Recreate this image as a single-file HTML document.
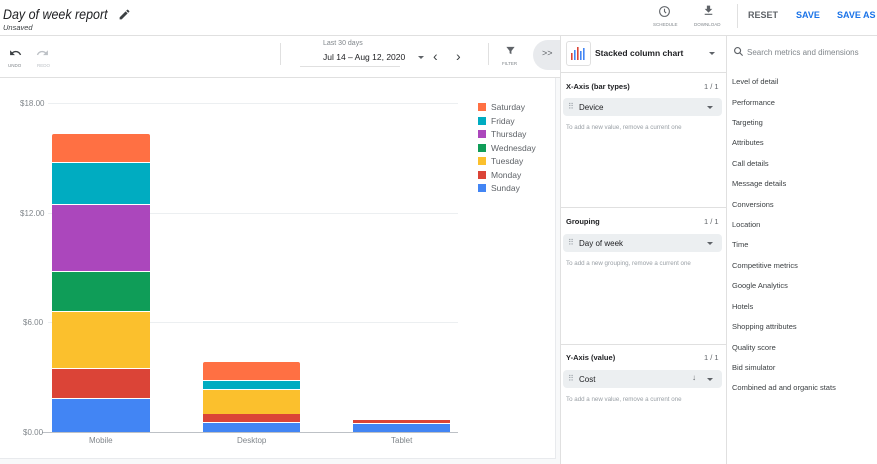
<!DOCTYPE html>
<html><head><style>
*{margin:0;padding:0;box-sizing:border-box;white-space:nowrap}
body{width:877px;height:464px;overflow:hidden;background:#fff;font-family:"Liberation Sans",Arial,sans-serif;position:relative;color:#202124}
.a{position:absolute}
.g{font-size:6.5px;color:#80868b}
.tick{font-size:8px;color:#80868b}
.gl{position:absolute;left:48px;width:410px;height:1px;background:#eceff1}
.seg{position:absolute}
.leg{position:absolute;left:478px;font-size:8.5px;color:#5f6368}
.leg i{display:inline-block;width:8px;height:8px;margin-right:5px;vertical-align:-1px}
.item{position:absolute;left:732px;font-size:7.5px;color:#3c4043}
.chip{position:absolute;left:563px;width:159px;height:18px;background:#eceff1;border-radius:4px;font-size:8px;color:#202124;padding:5px 0 0 16px}
.chip:before{content:"⠿";position:absolute;left:5px;top:4px;color:#9aa0a6;font-size:8px}
.chip:after{content:"";position:absolute;right:9px;top:8px;border:3px solid transparent;border-top:3px solid #5f6368}
.hd{position:absolute;left:566px;font-size:7.5px;font-weight:bold}
.hn{position:absolute;left:704px;font-size:7.5px;color:#5f6368}
.hint{position:absolute;left:566px;font-size:6.2px;color:#9aa0a6}
</style></head><body>
<div class="a" style="left:3px;top:6px;font-size:14px;font-style:italic;color:#202124;transform:scaleX(0.89);transform-origin:0 0">Day of week report</div>
<svg class="a" style="left:118px;top:8px" width="13" height="13" viewBox="0 0 24 24"><path d="M3 17.25V21h3.75L17.8 9.94l-3.75-3.75L3 17.250zM20.7 7.04a1 1 0 0 0 0-1.41l-2.34-2.34a1 1 0 0 0-1.41 0l-1.83 1.83 3.75 3.75 1.83-1.83z" fill="#3c4043"/></svg>
<div class="a" style="left:3px;top:23px;font-size:7.5px;font-style:italic;color:#3c4043">Unsaved</div>
<svg class="a" style="left:658px;top:5px" width="13" height="13" viewBox="0 0 24 24"><circle cx="12" cy="12" r="9" fill="none" stroke="#5f6368" stroke-width="2"/><path d="M12 7v5l3 3" fill="none" stroke="#5f6368" stroke-width="2"/></svg>
<div class="a g" style="left:653px;top:22px;font-size:4.5px">SCHEDULE</div>
<svg class="a" style="left:702px;top:4px" width="13" height="13" viewBox="0 0 24 24"><path d="M19 9h-4V3H9v6H5l7 7 7-7zM5 18v2h14v-2H5z" fill="#5f6368"/></svg>
<div class="a g" style="left:694px;top:22px;font-size:4.5px">DOWNLOAD</div>
<div class="a" style="left:737px;top:4px;width:1px;height:24px;background:#e0e0e0"></div>
<div class="a" style="left:748px;top:10px;font-size:9px;color:#5f6368;font-weight:bold">RESET</div>
<div class="a" style="left:796px;top:10px;font-size:9px;color:#1a73e8;font-weight:bold">SAVE</div>
<div class="a" style="left:837px;top:10px;font-size:9px;color:#1a73e8;font-weight:bold">SAVE AS</div>
<div class="a" style="left:0;top:35px;width:877px;height:1px;background:#e0e0e0"></div>
<svg class="a" style="left:9px;top:48px" width="13" height="10" viewBox="0 0 24 16"><path d="M12.5 4C9.85 4 7.45 5 5.6 6.6L2 3v9h9L7.38 8.38C8.77 7.22 10.54 6.5 12.5 6.5c3.54 0 6.55 2.31 7.6 5.5l2.37-.78C21.08 7.03 17.15 4 12.5 4z" fill="#3c4043"/></svg>
<svg class="a" style="left:36px;top:48px" width="13" height="10" viewBox="0 0 24 16"><path d="M18.4 6.6C16.55 5 14.15 4 11.5 4 6.85 4 2.92 7.03 1.54 11.22l2.36.78C4.95 8.81 7.95 6.5 11.5 6.5c1.95 0 3.73.72 5.12 1.88L13 12h9V3l-3.6 3.6z" fill="#bdc1c6"/></svg>
<div class="a g" style="left:8px;top:63px;font-size:4.5px">UNDO</div>
<div class="a" style="left:37px;top:63px;font-size:4.5px;color:#bdc1c6">REDO</div>
<div class="a" style="left:280px;top:43px;width:1px;height:22px;background:#e0e0e0"></div>
<div class="a" style="left:323px;top:40px;font-size:7px;color:#80868b">Last 30 days</div>
<div class="a" style="left:323px;top:52px;font-size:8.5px;color:#202124">Jul 14 – Aug 12, 2020</div>
<div class="a" style="left:300px;top:66px;width:100px;height:1px;background:#e0e0e0"></div>
<div class="a" style="left:418px;top:56px;border:3px solid transparent;border-top:3px solid #5f6368"></div>
<div class="a" style="left:433px;top:48px;font-size:14px;color:#3c4043">‹</div>
<div class="a" style="left:456px;top:48px;font-size:14px;color:#3c4043">›</div>
<div class="a" style="left:488px;top:43px;width:1px;height:22px;background:#e0e0e0"></div>
<svg class="a" style="left:505px;top:45px" width="11" height="11" viewBox="0 0 24 24"><path d="M3 4h18l-7 9v7l-4-2v-5z" fill="#5f6368"/></svg>
<div class="a g" style="left:502px;top:61px;font-size:4.5px">FILTER</div>
<div class="a" style="left:533px;top:40px;width:28px;height:30px;border-radius:15px 0 0 15px;background:#e8eaed"></div>
<div class="a" style="left:542px;top:48px;font-size:9px;color:#5f6368">&gt;&gt;</div>
<div class="a" style="left:0;top:77px;width:560px;height:1px;background:#e0e0e0"></div>
<div class="a" style="left:0;top:78px;width:560px;height:386px;background:#f8f9fa"></div>
<div class="a" style="left:0;top:78px;width:556px;height:381px;background:#fff;border-right:1px solid #e8eaed;border-bottom:1px solid #e8eaed"></div>
<div class="gl" style="top:103px"></div><div class="gl" style="top:213px"></div><div class="gl" style="top:322px"></div><div class="gl" style="top:432px;background:#bdc1c6;left:42px;width:416px"></div>
<div class="a tick" style="left:20px;top:99px">$18.00</div>
<div class="a tick" style="left:20px;top:209px">$12.00</div>
<div class="a tick" style="left:23px;top:318px">$6.00</div>
<div class="a tick" style="left:23px;top:428px">$0.00</div>
<div class="seg" style="left:52px;width:98px;top:134px;height:28px;background:#ff7043;border-radius:2px 2px 0 0"></div>
<div class="seg" style="left:52px;width:98px;top:163px;height:41px;background:#00acc1"></div>
<div class="seg" style="left:52px;width:98px;top:205px;height:66px;background:#ab47bc"></div>
<div class="seg" style="left:52px;width:98px;top:272px;height:39px;background:#0f9d58"></div>
<div class="seg" style="left:52px;width:98px;top:312px;height:56px;background:#fbc02d"></div>
<div class="seg" style="left:52px;width:98px;top:369px;height:29px;background:#db4437"></div>
<div class="seg" style="left:52px;width:98px;top:399px;height:33px;background:#4285f4"></div>
<div class="seg" style="left:203px;width:97px;top:362px;height:18px;background:#ff7043;border-radius:2px 2px 0 0"></div>
<div class="seg" style="left:203px;width:97px;top:381px;height:8px;background:#00acc1"></div>
<div class="seg" style="left:203px;width:97px;top:390px;height:24px;background:#fbc02d"></div>
<div class="seg" style="left:203px;width:97px;top:414px;height:8px;background:#db4437"></div>
<div class="seg" style="left:203px;width:97px;top:423px;height:9px;background:#4285f4"></div>
<div class="seg" style="left:353px;width:97px;top:420px;height:3px;background:#db4437"></div>
<div class="seg" style="left:353px;width:97px;top:424px;height:8px;background:#4285f4"></div>
<div class="a tick" style="left:89px;top:436px">Mobile</div>
<div class="a tick" style="left:237px;top:436px">Desktop</div>
<div class="a tick" style="left:391px;top:436px">Tablet</div>
<div class="leg" style="top:102px"><i style="background:#ff7043"></i>Saturday</div>
<div class="leg" style="top:116px"><i style="background:#00acc1"></i>Friday</div>
<div class="leg" style="top:129px"><i style="background:#ab47bc"></i>Thursday</div>
<div class="leg" style="top:143px"><i style="background:#0f9d58"></i>Wednesday</div>
<div class="leg" style="top:156px"><i style="background:#fbc02d"></i>Tuesday</div>
<div class="leg" style="top:170px"><i style="background:#db4437"></i>Monday</div>
<div class="leg" style="top:183px"><i style="background:#4285f4"></i>Sunday</div>
<div class="a" style="left:560px;top:36px;width:1px;height:428px;background:#e0e0e0"></div>
<div class="a" style="left:726px;top:36px;width:1px;height:428px;background:#e0e0e0"></div>
<div class="a" style="left:566px;top:41px;width:25px;height:25px;border:1px solid #e0e0e0;border-radius:3px"></div>
<svg class="a" style="left:570px;top:46px" width="18" height="14" viewBox="0 0 18 14"><rect x="1" y="7" width="1.6" height="7" fill="#db4437"/><rect x="4" y="4" width="1.6" height="10" fill="#4285f4"/><rect x="7" y="1" width="1.6" height="13" fill="#db4437"/><rect x="10" y="5" width="1.6" height="9" fill="#4285f4"/><rect x="13" y="2" width="1.6" height="12" fill="#4285f4"/></svg>
<div class="a" style="left:595px;top:48px;font-size:8.5px;font-weight:bold">Stacked column chart</div>
<div class="a" style="left:709px;top:52px;border:3px solid transparent;border-top:3px solid #5f6368"></div>
<div class="a" style="left:560px;top:72px;width:166px;height:1px;background:#e0e0e0"></div>
<div class="hd" style="top:82px">X-Axis (bar types)</div><div class="hn" style="top:82px">1 / 1</div>
<div class="chip" style="top:98px">Device</div>
<div class="hint" style="top:124px">To add a new value, remove a current one</div>
<div class="a" style="left:560px;top:207px;width:166px;height:1px;background:#e0e0e0"></div>
<div class="hd" style="top:217px">Grouping</div><div class="hn" style="top:217px">1 / 1</div>
<div class="chip" style="top:234px">Day of week</div>
<div class="hint" style="top:260px">To add a new grouping, remove a current one</div>
<div class="a" style="left:560px;top:344px;width:166px;height:1px;background:#e0e0e0"></div>
<div class="hd" style="top:353px">Y-Axis (value)</div><div class="hn" style="top:353px">1 / 1</div>
<div class="chip" style="top:370px">Cost</div>
<div class="a" style="left:692px;top:373px;font-size:8px;color:#5f6368">↓</div>
<div class="hint" style="top:396px">To add a new value, remove a current one</div>
<svg class="a" style="left:733px;top:46px" width="11" height="11" viewBox="0 0 24 24"><circle cx="10" cy="10" r="6.5" fill="none" stroke="#5f6368" stroke-width="2.5"/><path d="M15 15l6 6" stroke="#5f6368" stroke-width="2.5"/></svg>
<div class="a" style="left:747px;top:48px;font-size:8px;color:#80868b">Search metrics and dimensions</div>
<div class="item" style="top:77px">Level of detail</div>
<div class="item" style="top:98px">Performance</div>
<div class="item" style="top:118px">Targeting</div>
<div class="item" style="top:138px">Attributes</div>
<div class="item" style="top:159px">Call details</div>
<div class="item" style="top:179px">Message details</div>
<div class="item" style="top:200px">Conversions</div>
<div class="item" style="top:220px">Location</div>
<div class="item" style="top:240px">Time</div>
<div class="item" style="top:261px">Competitive metrics</div>
<div class="item" style="top:281px">Google Analytics</div>
<div class="item" style="top:302px">Hotels</div>
<div class="item" style="top:322px">Shopping attributes</div>
<div class="item" style="top:343px">Quality score</div>
<div class="item" style="top:363px">Bid simulator</div>
<div class="item" style="top:383px">Combined ad and organic stats</div>
</body></html>
